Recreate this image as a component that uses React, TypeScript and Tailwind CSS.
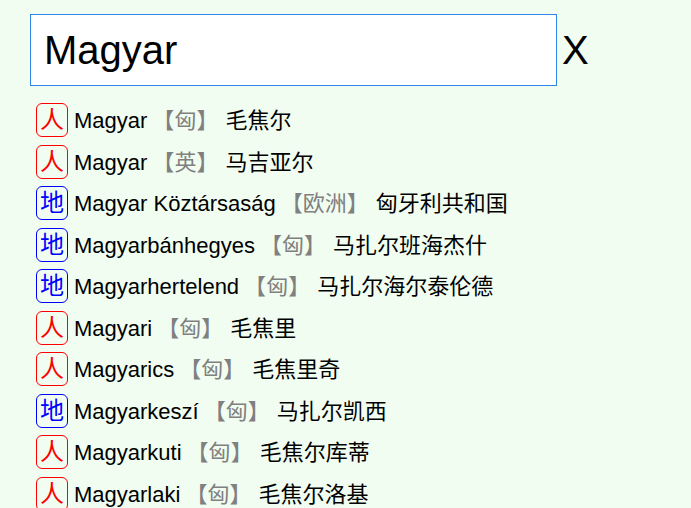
import React from 'react';

const rows = [
  { kind: '人', word: 'Magyar', lang: '匈', text: '毛焦尔' },
  { kind: '人', word: 'Magyar', lang: '英', text: '马吉亚尔' },
  { kind: '地', word: 'Magyar Köztársaság', lang: '欧洲', text: '匈牙利共和国' },
  { kind: '地', word: 'Magyarbánhegyes', lang: '匈', text: '马扎尔班海杰什' },
  { kind: '地', word: 'Magyarhertelend', lang: '匈', text: '马扎尔海尔泰伦德' },
  { kind: '人', word: 'Magyari', lang: '匈', text: '毛焦里' },
  { kind: '人', word: 'Magyarics', lang: '匈', text: '毛焦里奇' },
  { kind: '地', word: 'Magyarkeszí', lang: '匈', text: '马扎尔凯西' },
  { kind: '人', word: 'Magyarkuti', lang: '匈', text: '毛焦尔库蒂' },
  { kind: '人', word: 'Magyarlaki', lang: '匈', text: '毛焦尔洛基' },
];

export default function App() {
  return (
    <div className="h-[508px] overflow-hidden bg-[#f1fdf1] pt-[14px] pl-[30px] font-['Liberation_Sans','Noto_Sans_CJK_SC',sans-serif] text-black">
      <div className="flex items-center">
        <input
          readOnly
          value="Magyar"
          className="h-[72px] w-[527px] border border-[#2f86ea] bg-white px-[13px] text-[40px] outline-none"
        />
        <span className="ml-[5px] text-[40px] leading-none">X</span>
      </div>
      <ul className="mt-[17.4px] ml-[6px]">
        {rows.map((r, i) => (
          <li key={i} className="mb-[7.5px] flex h-[34px] items-center text-[22px] whitespace-nowrap">
            <span
              className={
                r.kind === '人'
                  ? 'mr-[6px] flex h-[34px] w-[32px] items-center justify-center rounded-[6px] border border-[#ff0000] text-[24px] text-[#ff0000]'
                  : 'mr-[6px] flex h-[34px] w-[32px] items-center justify-center rounded-[6px] border border-[#0000ff] text-[24px] text-[#0000ff]'
              }
            >
              {r.kind}
            </span>
            <div className="flex items-center pt-[1px]">
              <span>{r.word}</span>
              <span className="ml-[5px] text-[#808080]">【{r.lang}】</span>
              <span className="ml-[7px]">{r.text}</span>
            </div>
          </li>
        ))}
      </ul>
    </div>
  );
}
